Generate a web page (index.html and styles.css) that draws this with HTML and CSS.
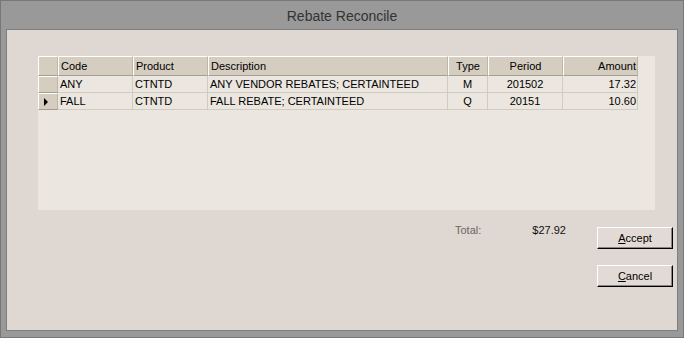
FILE: index.html
```html
<!DOCTYPE html>
<html lang="en">
<head>
    <meta charset="UTF-8">
    <title>Rebate Reconcile</title>
    <link rel="stylesheet" href="styles.css">
</head>
<body>

    <div class="window">
        <div class="titlebar">Rebate Reconcile</div>

        <div class="client">
            <div class="grid">
                <table>
                    <colgroup>
                        <col class="c-rowhead">
                        <col class="c-code">
                        <col class="c-product">
                        <col class="c-desc">
                        <col class="c-type">
                        <col class="c-period">
                        <col class="c-amount">
                    </colgroup>
                    <thead>
                        <tr>
                            <th class="rowhead"></th>
                            <th>Code</th>
                            <th>Product</th>
                            <th>Description</th>
                            <th class="center">Type</th>
                            <th class="center">Period</th>
                            <th class="right">Amount</th>
                        </tr>
                    </thead>
                    <tbody>
                        <tr>
                            <td class="rowhead"></td>
                            <td>ANY</td>
                            <td>CTNTD</td>
                            <td>ANY VENDOR REBATES; CERTAINTEED</td>
                            <td class="center">M</td>
                            <td class="center">201502</td>
                            <td class="right">17.32</td>
                        </tr>
                        <tr>
                            <td class="rowhead"><span class="current"></span></td>
                            <td>FALL</td>
                            <td>CTNTD</td>
                            <td>FALL REBATE; CERTAINTEED</td>
                            <td class="center">Q</td>
                            <td class="center">20151</td>
                            <td class="right">10.60</td>
                        </tr>
                    </tbody>
                </table>
            </div>

            <div class="footer">
                <div class="totals">
                    <span class="total-label">Total:</span>
                    <span class="total-value">$27.92</span>
                </div>
                <div class="buttons">
                    <button type="button"><u>A</u>ccept</button>
                    <button type="button"><u>C</u>ancel</button>
                </div>
            </div>
        </div>
    </div>

</body>
</html>
```

FILE: styles.css
```css
body {
    margin: 0;
    font-family: "Liberation Sans", Arial, sans-serif;
    font-size: 11px;
    background: #999999;
}

.window {
    box-sizing: border-box;
    width: 684px;
    height: 338px;
    background: #999999;
    border: 1px solid #777777;
    padding: 0 5px;
}

.titlebar {
    height: 28px;
    line-height: 30px;
    text-align: center;
    font-size: 14px;
    color: #333333;
}

.client {
    box-sizing: border-box;
    height: 302px;
    background: #dfd8d2;
    border: 1px solid #7f7f7f;
    padding: 26px 4px 0 31px;
}

.grid {
    width: 617px;
    height: 154px;
    background: #ebe6df;
}

table {
    border-spacing: 0;
    table-layout: fixed;
    width: 600px;
    font-size: 11px;
    color: #000000;
}

.c-rowhead { width: 20px; }
.c-code { width: 75px; }
.c-product { width: 75px; }
.c-desc { width: 240px; }
.c-type { width: 40px; }
.c-period { width: 75px; }
.c-amount { width: 75px; }

th, td {
    box-sizing: border-box;
    padding: 0 2px;
    line-height: 13px;
    white-space: nowrap;
    overflow: hidden;
    vertical-align: middle;
}

th {
    height: 20px;
    font-weight: normal;
    text-align: left;
    background: #d5cdc0;
    border-top: 1px solid #ffffff;
    border-left: 1px solid #ffffff;
    border-right: 1px solid #bdb5a8;
    border-bottom: 1px solid #a59d91;
}

td {
    height: 17px;
    border-right: 1px solid #d2cbc0;
    border-bottom: 1px solid #d2cbc0;
}

td.rowhead {
    background: #d5cdc0;
    border-top: 1px solid #ffffff;
    border-left: 1px solid #ffffff;
    border-right: 1px solid #bdb5a8;
    border-bottom: 1px solid #a59d91;
    padding: 0;
}

.center { text-align: center; }
.right { text-align: right; }

th.right, td.right {
    padding-right: 1px;
}

.current {
    display: block;
    width: 0;
    height: 0;
    margin-left: 5px;
    border-top: 4px solid transparent;
    border-bottom: 4px solid transparent;
    border-left: 4px solid #000000;
}

.footer {
    display: flex;
    justify-content: flex-end;
    align-items: flex-start;
    padding-top: 13px;
}

.totals {
    display: flex;
    justify-content: space-between;
    width: 111px;
    margin-right: 31px;
    line-height: 14px;
}

.total-label {
    color: #666666;
}

.total-value {
    color: #111111;
}

.buttons {
    display: flex;
    flex-direction: column;
    gap: 16px;
    margin-top: 4px;
}

button {
    box-sizing: border-box;
    width: 76px;
    height: 22px;
    padding: 0;
    font-family: "Liberation Sans", Arial, sans-serif;
    font-size: 11px;
    color: #000000;
    background: #e2dbd5;
    border: 1px solid;
    border-color: #ffffff #000000 #000000 #ffffff;
    box-shadow: inset -1px -1px 0 #8a8580;
    cursor: pointer;
}
```
